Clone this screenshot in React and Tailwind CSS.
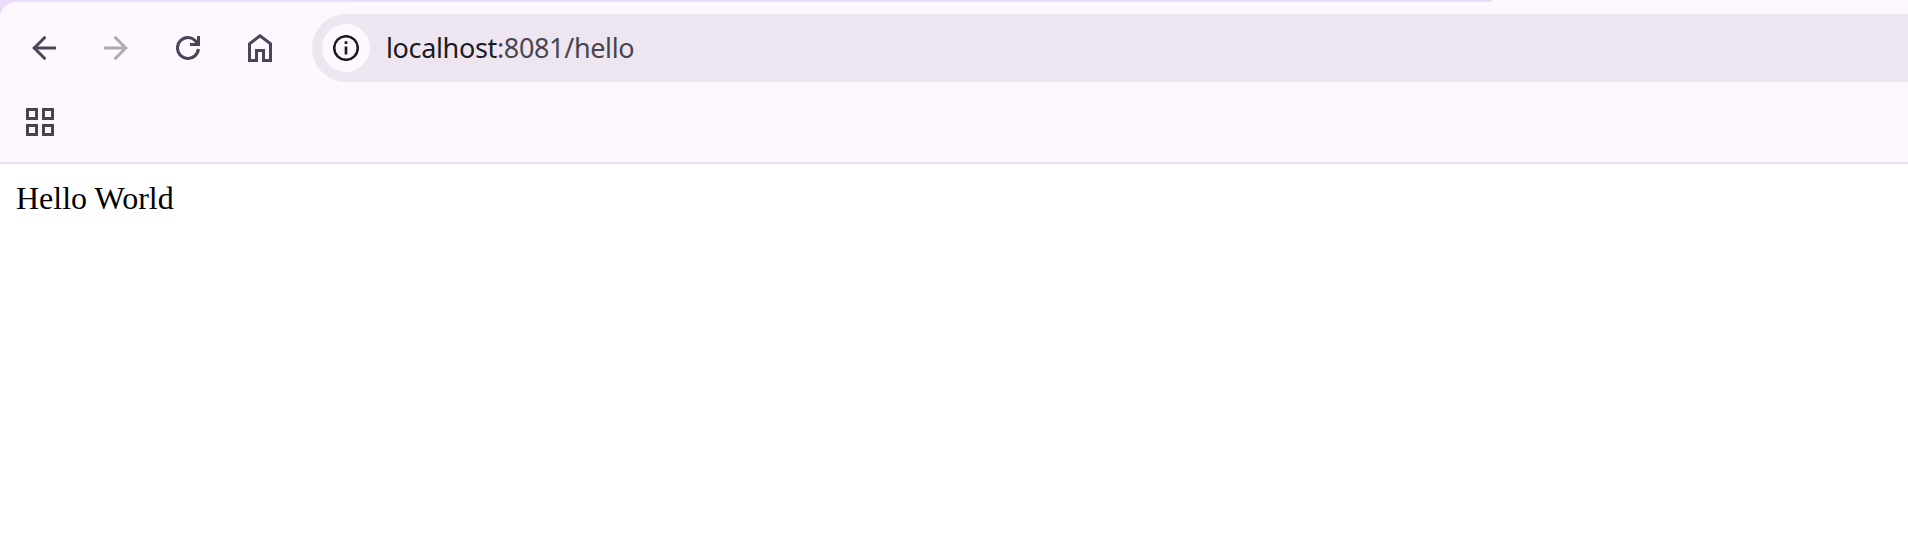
function ArrowIcon({ className }) {
  return (
    <svg viewBox="0 0 24 24" className={className} fill="none" stroke="currentColor" strokeWidth="3">
      <path d="M24 12H3" />
      <path d="M12.5 1.7 2.2 12l10.3 10.3" strokeLinecap="round" strokeLinejoin="miter" />
    </svg>
  );
}

function ReloadIcon() {
  return (
    <svg viewBox="0 0 24 24" className="size-6" fill="none" stroke="currentColor" strokeWidth="3">
      <path d="M22.4 13A10.5 10.5 0 1 1 12 1.5C16 1.5 19 3.8 21.5 7.5" />
      <path d="M22.5 0V8.5H14" />
    </svg>
  );
}

function HomeIcon() {
  return (
    <svg viewBox="0 0 24 28" className="h-7 w-6" fill="none" stroke="currentColor" strokeWidth="3">
      <path d="M1.5 26.5V9.7L12 1.8l10.5 7.9v16.8H15.5V16.5H8.5v10z" />
    </svg>
  );
}

function InfoIcon() {
  return (
    <svg viewBox="0 0 26 26" className="size-[26px]" fill="none" stroke="currentColor">
      <circle cx="13" cy="13" r="11.8" strokeWidth="2.5" />
      <path d="M13 11.5v8M13 6.3v2.8" strokeWidth="2.7" />
    </svg>
  );
}

function AppsIcon() {
  return (
    <div className="grid w-7 grid-cols-2 gap-1">
      {[0, 1, 2, 3].map((i) => (
        <span key={i} className="size-3 border-3 border-[#49454e]" />
      ))}
    </div>
  );
}

export default function App() {
  return (
    <div className="flex h-[554px] w-full flex-col overflow-hidden bg-white">
      <header className="relative h-[164px] shrink-0 border-b-2 border-[#e7e0ec] bg-[#eaddf7]">
        <div className="absolute top-0 right-0 h-2 w-[416px] bg-[#fef7ff]" />
        <div className="pt-0.5">
          <div className="relative h-40 rounded-tl-2xl bg-[#fef7ff]">
            <div className="flex h-[92px] items-center pl-8 text-[#4a4458]">
              <ArrowIcon className="size-6" />
              <ArrowIcon className="ml-12 size-6 rotate-180 text-[#aea9b1]" />
              <div className="ml-12">
                <ReloadIcon />
              </div>
              <div className="ml-12">
                <HomeIcon />
              </div>
              <div className="ml-10 flex h-[68px] flex-1 items-center rounded-l-full bg-[#ede6f1] pl-2.5">
                <div className="flex size-12 items-center justify-center rounded-full bg-[#fef7ff] text-[#1d1b20]">
                  <InfoIcon />
                </div>
                <div className="ml-4 font-['Noto_Sans',sans-serif] text-[27px] leading-9 tracking-[-0.35px] text-[#49454e]">
                  <span className="text-[#1d1b20]">localhost</span>:8081/hello
                </div>
              </div>
            </div>
            <div className="pt-3.5 pl-[26px]">
              <AppsIcon />
            </div>
          </div>
        </div>
      </header>
      <main className="flex-1 p-4 font-['Liberation_Serif',serif] text-[32px] leading-[37px] text-black">
        Hello World
      </main>
    </div>
  );
}
